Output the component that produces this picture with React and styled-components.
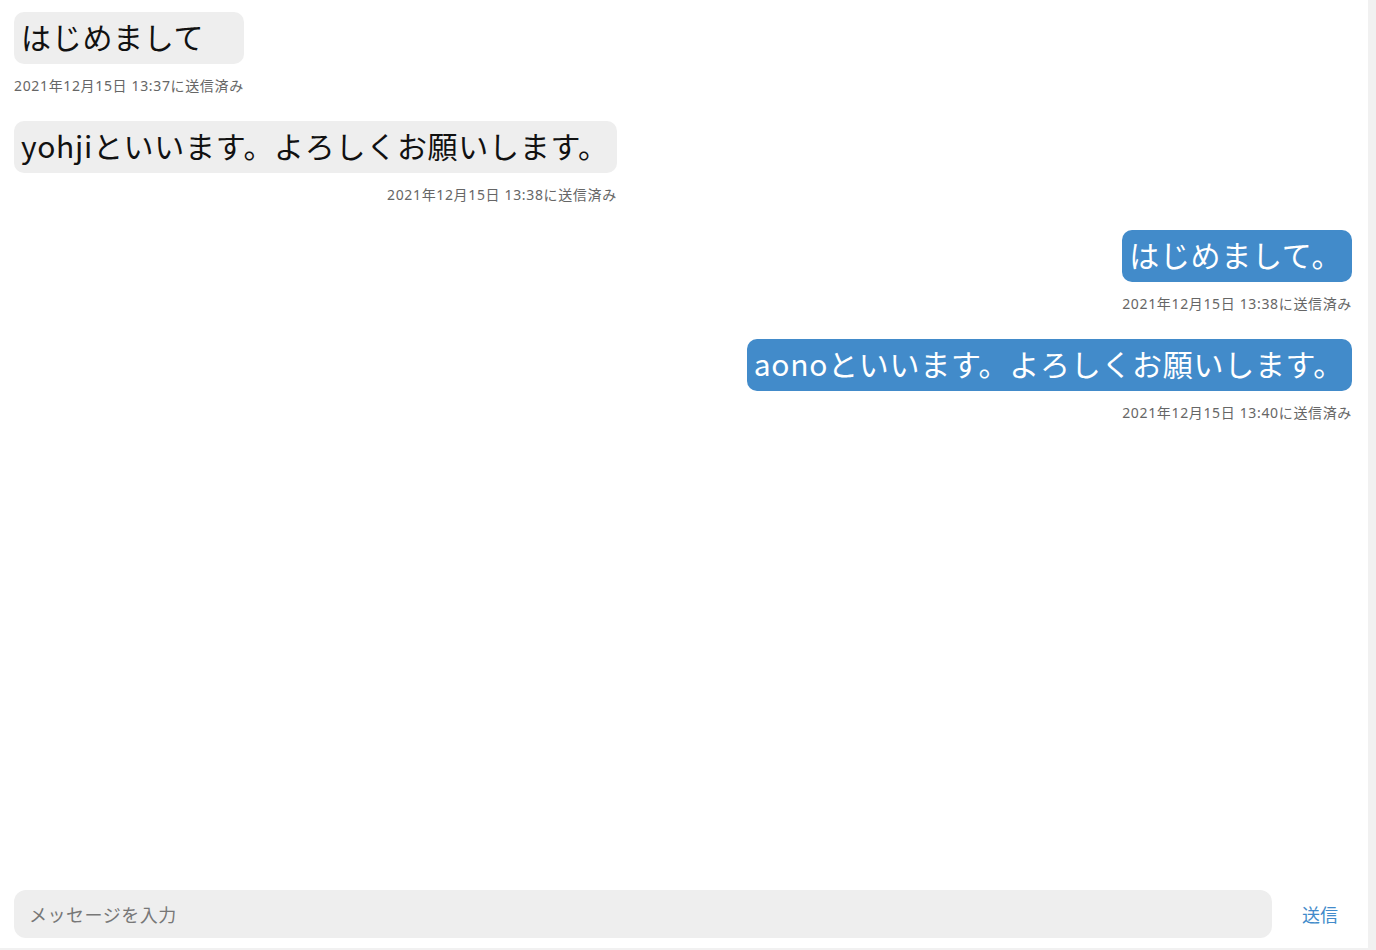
import React from "react";
import styled, { createGlobalStyle } from "styled-components";

const GlobalStyle = createGlobalStyle`
  html, body {
    margin: 0;
    padding: 0;
    background: #f1f1f1;
  }
  body {
    font-family: "Noto Sans CJK JP", "Noto Sans", sans-serif;
  }
`;

const messages = [
  { id: 1, text: "はじめまして", sentAt: "2021年12月15日 13:37に送信済み", mine: false },
  { id: 2, text: "yohjiといいます。よろしくお願いします。", sentAt: "2021年12月15日 13:38に送信済み", mine: false },
  { id: 3, text: "はじめまして。", sentAt: "2021年12月15日 13:38に送信済み", mine: true },
  { id: 4, text: "aonoといいます。よろしくお願いします。", sentAt: "2021年12月15日 13:40に送信済み", mine: true },
];

const Room = styled.div`
  width: calc(100% - 8px);
  height: 948px;
  background: #fff;
  display: flex;
  flex-direction: column;
`;

const MessageList = styled.div`
  flex: 1;
  display: flex;
  flex-direction: column;
  padding: 12px 16px 0 14px;
`;

const MessageItem = styled.div`
  display: flex;
  flex-direction: column;
  align-items: stretch;
  align-self: ${p => (p.mine ? "flex-end" : "flex-start")};
  margin-bottom: 25px;
`;

const Bubble = styled.div`
  padding: 6px 8px 10px 7px;
  font-size: 30px;
  line-height: 36px;
  letter-spacing: 0.7px;
  border-radius: 10px;
  background: ${p => (p.mine ? "#428bca" : "#eeeeee")};
  color: ${p => (p.mine ? "#fff" : "#111")};
  white-space: nowrap;
`;

const SentAt = styled.div`
  margin-top: 12px;
  font-family: "Noto Sans", "Noto Sans CJK JP", sans-serif;
  font-size: 14px;
  line-height: 20px;
  letter-spacing: 0.65px;
  color: #666;
  text-align: right;
  white-space: nowrap;
`;

const Footer = styled.form`
  display: flex;
  align-items: center;
  padding: 0 0 10px 14px;
`;

const Input = styled.input`
  flex: 1;
  height: 48px;
  box-sizing: border-box;
  border: none;
  outline: none;
  border-radius: 12px;
  background: #eeeeee;
  padding: 0 15px;
  font-family: inherit;
  font-size: 18px;
  letter-spacing: 0.5px;
  color: #333;
  &::placeholder {
    color: #777;
  }
`;

const SendButton = styled.button`
  width: 96px;
  height: 48px;
  border: none;
  background: transparent;
  font-family: inherit;
  font-size: 18px;
  color: #428bca;
  cursor: pointer;
  padding: 0;
`;

const App = () => {
  return (
    <>
      <GlobalStyle />
      <Room>
        <MessageList>
          {messages.map(m => (
            <MessageItem key={m.id} mine={m.mine}>
              <Bubble mine={m.mine}>{m.text}</Bubble>
              <SentAt>{m.sentAt}</SentAt>
            </MessageItem>
          ))}
        </MessageList>
        <Footer onSubmit={e => e.preventDefault()}>
          <Input placeholder="メッセージを入力" />
          <SendButton type="submit">送信</SendButton>
        </Footer>
      </Room>
    </>
  );
};

export default App;
